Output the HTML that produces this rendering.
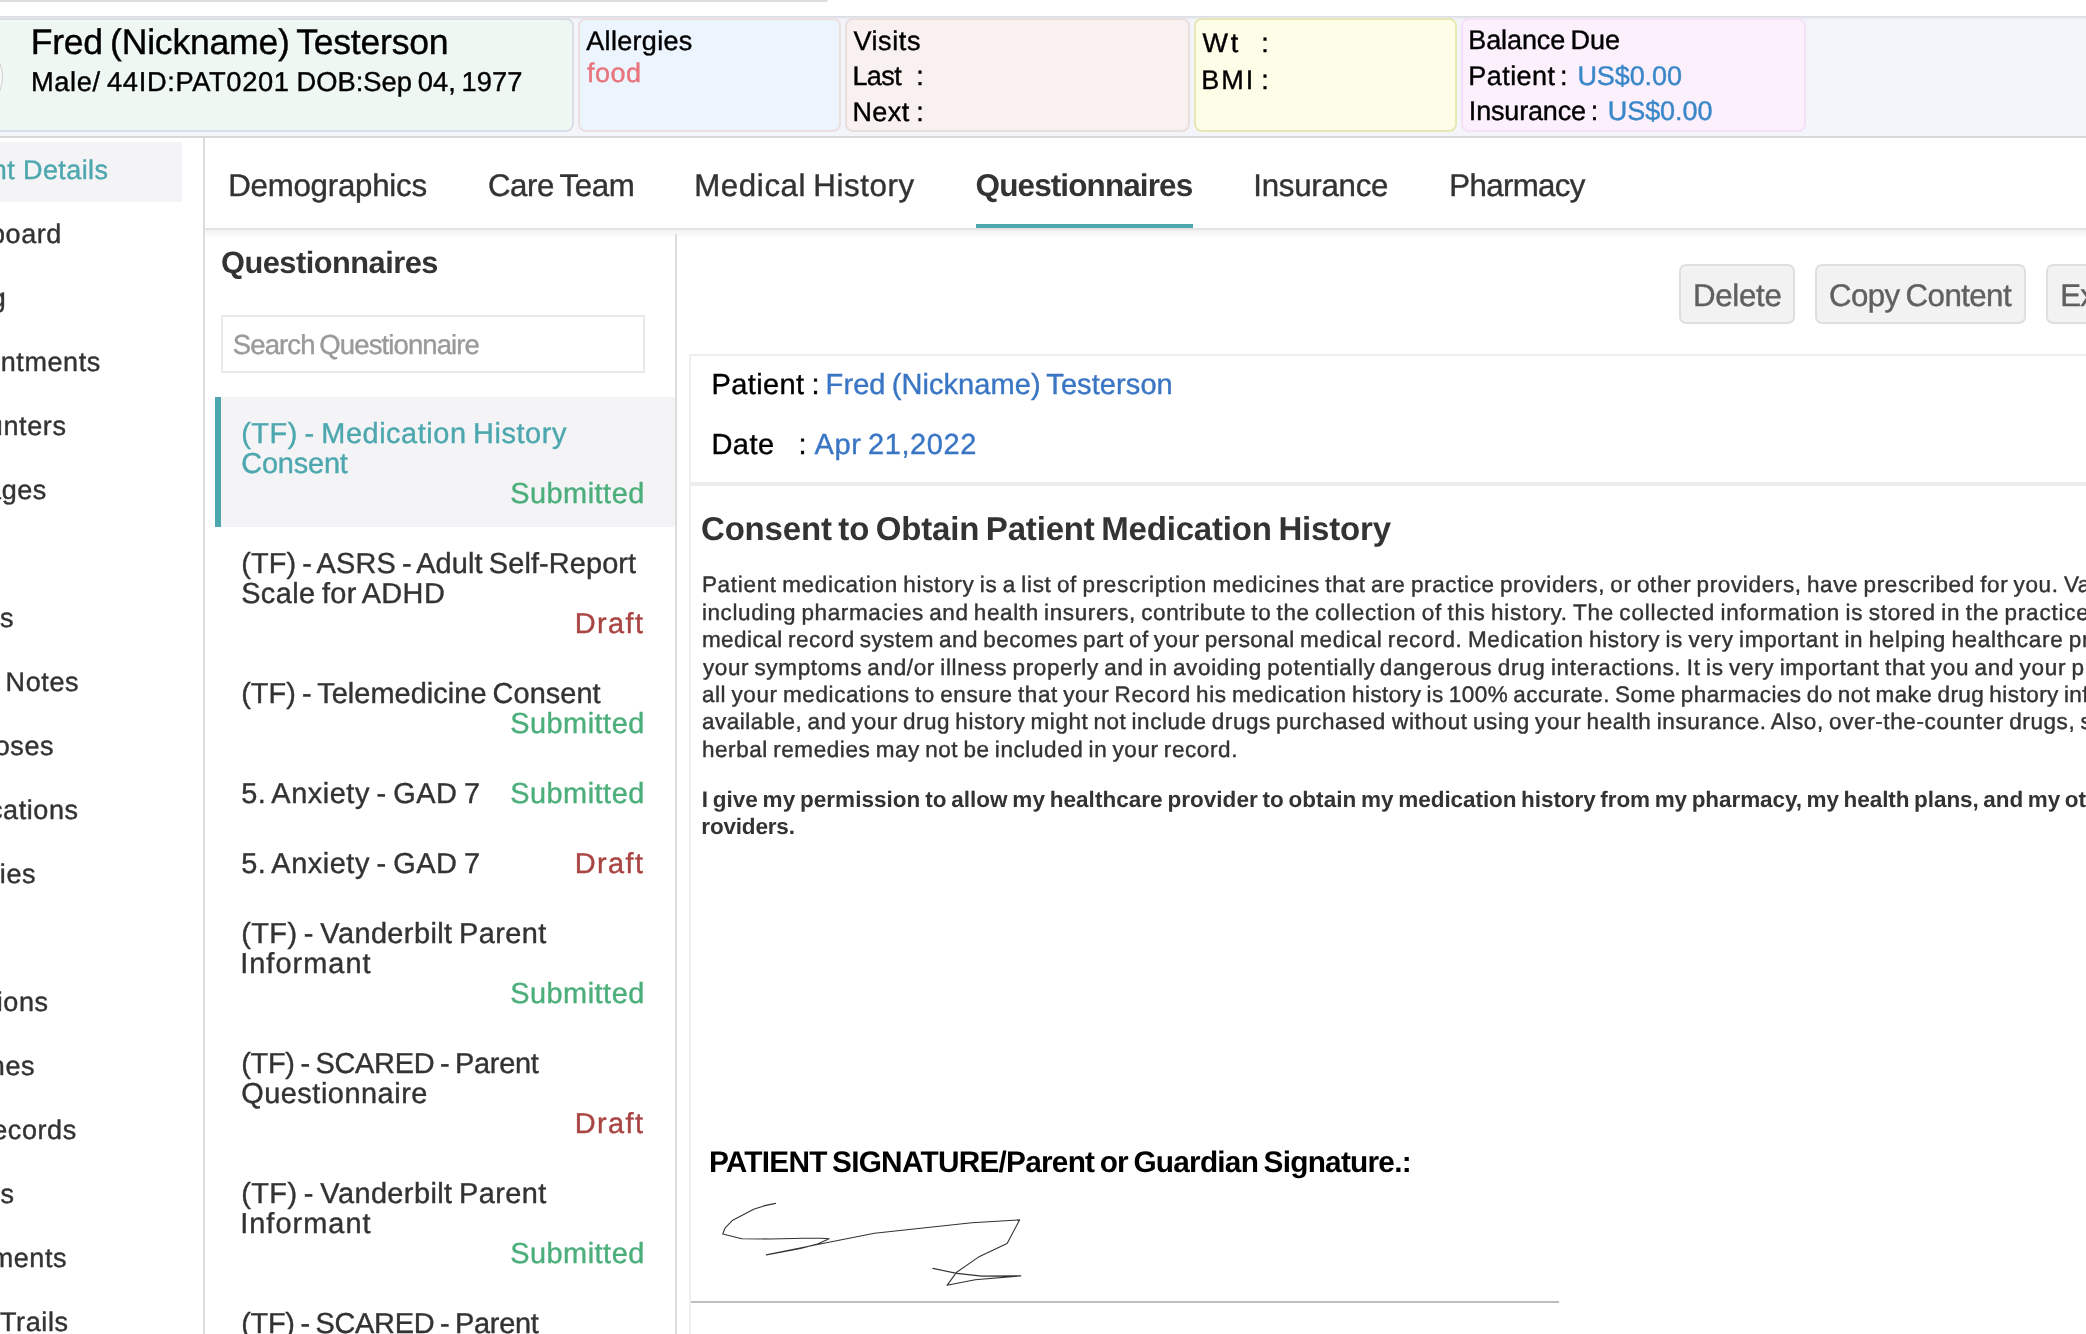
<!DOCTYPE html>
<html lang="en"><head><meta charset="utf-8"><title>Patient Questionnaires</title>
<style>

html,body{margin:0;padding:0;overflow:hidden;}
#root{position:absolute;left:0;top:0;width:2086px;height:1334px;overflow:hidden;background:#fff;}
body{width:2086px;height:1334px;overflow:hidden;background:#fff;position:relative;font-family:"Liberation Sans",sans-serif;color:#000;}
.a{position:absolute;box-sizing:border-box;}
.t{position:absolute;white-space:pre;line-height:normal;-webkit-text-stroke:0.4px;text-rendering:geometricPrecision;}
.b{-webkit-text-stroke:0;}
.txt{position:absolute;left:0;top:0;width:2086px;height:1334px;overflow:hidden;will-change:transform;}
.pre{position:absolute;right:100%;top:0;white-space:pre;}
.card{position:absolute;box-sizing:border-box;top:18px;height:114px;border:2px solid;border-radius:8px;}
.btn{position:absolute;box-sizing:border-box;top:264px;height:60px;border:2px solid #dfdfdf;border-radius:7px;background:#f2f2f2;}

</style></head>
<body>
<div id="root">
<div class="a" style="left:-10px;top:0;width:838px;height:2px;background:#dbdce0;border-radius:0 0 10px 0;"></div>
<div class="a" style="left:0;top:16px;width:2086px;height:122px;background:#f4f5fa;border-bottom:2px solid #d8d8d8;"></div>
<div class="a" style="left:0;top:16px;width:2086px;height:4px;background:linear-gradient(#d9dbe0,rgba(244,245,250,0));"></div>
<div class="card" style="left:-20px;width:594px;background:#eef7f2;border-color:#d7dfea;"></div>
<div class="a" style="left:-69px;top:41px;width:72px;height:72px;border-radius:50%;border:1.5px solid #cfcfcf;background:#f9f9f9;"></div>
<div class="card" style="left:578px;width:263px;background:#ecf4fe;border-color:#ebdfdf;"></div>
<div class="card" style="left:845px;width:345px;background:#f9f0f0;border-color:#eadfdf;"></div>
<div class="card" style="left:1194px;width:263px;background:#fefee8;border-color:#e7e8b4;"></div>
<div class="card" style="left:1461px;width:345px;background:#fdf0fd;border-color:#f6e0f8;"></div>

<div class="a" style="left:0;top:142px;width:182px;height:60px;background:#f4f4f7;"></div>
<div class="a" style="left:203px;top:138px;width:2px;height:1196px;background:#dcdcdc;"></div>

<div class="a" style="left:205px;top:228px;width:1881px;height:2px;background:#e3e3e3;"></div>
<div class="a" style="left:205px;top:230px;width:1881px;height:8px;background:linear-gradient(rgba(0,0,0,0.05),rgba(0,0,0,0));"></div>
<div class="a" style="left:976px;top:224px;width:217px;height:4px;background:#4da7ae;"></div>

<div class="a" style="left:675px;top:234px;width:2px;height:1100px;background:#dcdcdc;"></div>
<div class="a" style="left:221px;top:315px;width:424px;height:58px;border:2px solid #e9e9e9;background:#fff;"></div>
<div class="a" style="left:221px;top:397px;width:454px;height:130px;background:#f4f4f7;"></div>
<div class="a" style="left:215px;top:397px;width:6px;height:130px;background:#4da7ae;"></div>

<div class="btn" style="left:1679px;width:116px;"></div>
<div class="btn" style="left:1815px;width:211px;"></div>
<div class="btn" style="left:2046px;width:120px;"></div>

<div class="a" style="left:689px;top:354px;width:1420px;height:1000px;border-left:2px solid #eeeeee;border-top:2px solid #eeeeee;"></div>
<div class="a" style="left:691px;top:482px;width:1400px;height:4px;background:#ededed;"></div>
<div class="a" style="left:691px;top:1301px;width:868px;height:2px;background:#bdbdbd;"></div>

<svg class="a" style="left:700px;top:1190px;" width="350" height="110" viewBox="700 1190 350 110" fill="none" stroke="#333" stroke-width="1.1" stroke-linejoin="round" stroke-linecap="round">
<path d="M775.5 1203.4 L763.8 1205.9 L753.7 1209.3 L732.7 1220.2 L725.2 1227.8 L722.7 1234 L741.9 1238.7 L770.5 1239 L804 1238.2 L820.8 1238.2 L829.2 1238.7 L817.5 1244 L800.7 1248.4 L766.3 1254.9 L817.5 1244.5 L874.5 1233.3 L971.8 1222.7 L1019.6 1219.9 L1007.1 1243.4 L978.5 1257.1 L956.7 1272.2 L947 1285.3 L975.2 1279.8 L1020.8 1275.9 L981.9 1276.1 L956.7 1273.4 L932.9 1268.4"/>
</svg>
<div class="txt">
<span class="t" style="left:30.70px;top:21.90px;font-size:35.6px;letter-spacing:-0.229px;word-spacing:-2.49px;">Fred (Nickname) Testerson</span>
<span class="t" style="left:30.90px;top:66.10px;font-size:27.3px;letter-spacing:0.624px;word-spacing:-1.91px;">Male/ 44ID:PAT0201</span>
<span class="t" style="left:296.50px;top:66.10px;font-size:27.3px;letter-spacing:0.033px;word-spacing:-1.91px;">DOB:Sep 04, 1977</span>
<span class="t" style="left:586.30px;top:25.70px;font-size:27px;letter-spacing:0.312px;">Allergies</span>
<span class="t" style="left:586.90px;top:58.30px;font-size:27px;color:#e8747c;letter-spacing:0.500px;">food</span>
<span class="t" style="left:853.40px;top:25.70px;font-size:27px;letter-spacing:0.600px;">Visits</span>
<span class="t" style="left:852.40px;top:60.80px;font-size:27px;letter-spacing:-0.567px;">Last</span>
<span class="t" style="left:916.20px;top:60.80px;font-size:27px;">:</span>
<span class="t" style="left:852.40px;top:96.70px;font-size:27px;letter-spacing:0.467px;">Next</span>
<span class="t" style="left:916.20px;top:96.70px;font-size:27px;">:</span>
<span class="t" style="left:1202.40px;top:27.60px;font-size:27px;letter-spacing:2.800px;">Wt</span>
<span class="t" style="left:1261.20px;top:27.60px;font-size:27px;">:</span>
<span class="t" style="left:1201.20px;top:64.50px;font-size:27px;letter-spacing:2.000px;">BMI</span>
<span class="t" style="left:1261.20px;top:64.50px;font-size:27px;">:</span>
<span class="t" style="left:1468.30px;top:25.30px;font-size:27px;letter-spacing:-0.110px;word-spacing:-1.89px;">Balance Due</span>
<span class="t" style="left:1468.30px;top:60.60px;font-size:27px;letter-spacing:0.450px;">Patient</span>
<span class="t" style="left:1559.90px;top:60.60px;font-size:27px;">:</span>
<span class="t" style="left:1577.40px;top:60.60px;font-size:27px;color:#3a87c8;letter-spacing:-0.083px;">US$0.00</span>
<span class="t" style="left:1468.80px;top:96.20px;font-size:27px;letter-spacing:-0.162px;">Insurance</span>
<span class="t" style="left:1590.80px;top:96.20px;font-size:27px;">:</span>
<span class="t" style="left:1607.70px;top:96.20px;font-size:27px;color:#3a87c8;letter-spacing:-0.033px;">US$0.00</span>
<span class="t" style="left:23.00px;top:154.90px;font-size:27px;color:#4da7ae;letter-spacing:0.400px;"><span class="pre">Patient </span>Details</span>
<span class="t" style="left:-75.50px;top:219.00px;font-size:27px;color:#333;letter-spacing:0.600px;">Dashboard</span>
<span class="t" style="left:-100.40px;top:283.00px;font-size:27px;color:#333;letter-spacing:0.600px;">Charting</span>
<span class="t" style="left:-71.40px;top:346.70px;font-size:27px;color:#333;letter-spacing:0.600px;">Appointments</span>
<span class="t" style="left:-76.10px;top:410.60px;font-size:27px;color:#333;letter-spacing:0.600px;">Encounters</span>
<span class="t" style="left:-80.90px;top:475.00px;font-size:27px;color:#333;letter-spacing:0.600px;">Messages</span>
<span class="t" style="left:-55.00px;top:603.00px;font-size:27px;color:#333;letter-spacing:0.600px;">Vitals</span>
<span class="t" style="left:5.60px;top:667.00px;font-size:27px;color:#333;letter-spacing:0.600px;">Notes</span>
<span class="t" style="left:-78.80px;top:731.00px;font-size:27px;color:#333;letter-spacing:0.600px;">Diagnoses</span>
<span class="t" style="left:-72.00px;top:795.00px;font-size:27px;color:#333;letter-spacing:0.600px;">Medications</span>
<span class="t" style="left:-72.80px;top:859.00px;font-size:27px;color:#333;letter-spacing:0.600px;">Allergies</span>
<span class="t" style="left:-133.20px;top:987.00px;font-size:27px;color:#333;letter-spacing:0.600px;">Immunizations</span>
<span class="t" style="left:-77.20px;top:1051.00px;font-size:27px;color:#333;letter-spacing:0.600px;">Vaccines</span>
<span class="t" style="left:-115.80px;top:1115.00px;font-size:27px;color:#333;letter-spacing:0.600px;word-spacing:-1.89px;">Health Records</span>
<span class="t" style="left:-45.40px;top:1179.00px;font-size:27px;color:#333;letter-spacing:0.600px;">Files</span>
<span class="t" style="left:-74.80px;top:1243.00px;font-size:27px;color:#333;letter-spacing:0.600px;">Documents</span>
<span class="t" style="left:0.00px;top:1307.00px;font-size:27px;color:#333;letter-spacing:0.600px;">Trails</span>
<span class="t" style="left:228.20px;top:167.50px;font-size:31.25px;color:#333;letter-spacing:-0.236px;">Demographics</span>
<span class="t" style="left:487.90px;top:167.50px;font-size:31.25px;color:#333;letter-spacing:-0.388px;word-spacing:-2.19px;">Care Team</span>
<span class="t" style="left:694.20px;top:167.50px;font-size:31.25px;color:#333;letter-spacing:0.614px;word-spacing:-2.19px;">Medical History</span>
<span class="t b" style="left:975.60px;top:166.50px;font-size:31.5px;font-weight:700;color:#333;letter-spacing:-0.900px;">Questionnaires</span>
<span class="t" style="left:1253.30px;top:167.50px;font-size:31.25px;color:#333;letter-spacing:-0.262px;">Insurance</span>
<span class="t" style="left:1449.30px;top:167.50px;font-size:31.25px;color:#333;letter-spacing:-0.657px;">Pharmacy</span>
<span class="t b" style="left:221.00px;top:245.40px;font-size:30.75px;font-weight:700;color:#333;letter-spacing:-0.500px;">Questionnaires</span>
<span class="t" style="left:232.80px;top:329.00px;font-size:27.5px;color:#9a9a9a;letter-spacing:-0.895px;word-spacing:-1.93px;">Search Questionnaire</span>
<span class="t" style="left:241.20px;top:417.80px;font-size:28.9px;color:#4da7ae;letter-spacing:0.558px;word-spacing:-2.02px;">(TF) - Medication History</span>
<span class="t" style="left:241.20px;top:447.80px;font-size:28.9px;color:#4da7ae;letter-spacing:-0.150px;">Consent</span>
<span class="t" style="left:510.20px;top:477.80px;font-size:28.9px;color:#4cae7b;letter-spacing:0.500px;">Submitted</span>
<span class="t" style="left:241.20px;top:547.70px;font-size:28.9px;color:#333;letter-spacing:0.123px;word-spacing:-2.02px;">(TF) - ASRS - Adult Self-Report</span>
<span class="t" style="left:241.20px;top:577.70px;font-size:28.9px;color:#333;letter-spacing:0.408px;word-spacing:-2.02px;">Scale for ADHD</span>
<span class="t" style="left:574.70px;top:607.70px;font-size:28.9px;color:#a94442;letter-spacing:1.425px;">Draft</span>
<span class="t" style="left:241.20px;top:677.70px;font-size:28.9px;color:#333;letter-spacing:0.058px;word-spacing:-2.02px;">(TF) - Telemedicine Consent</span>
<span class="t" style="left:510.20px;top:707.70px;font-size:28.9px;color:#4cae7b;letter-spacing:0.500px;">Submitted</span>
<span class="t" style="left:241.20px;top:777.80px;font-size:28.9px;color:#333;letter-spacing:0.547px;word-spacing:-2.02px;">5. Anxiety - GAD 7</span>
<span class="t" style="left:510.20px;top:777.80px;font-size:28.9px;color:#4cae7b;letter-spacing:0.500px;">Submitted</span>
<span class="t" style="left:241.20px;top:847.80px;font-size:28.9px;color:#333;letter-spacing:0.547px;word-spacing:-2.02px;">5. Anxiety - GAD 7</span>
<span class="t" style="left:574.70px;top:847.80px;font-size:28.9px;color:#a94442;letter-spacing:1.425px;">Draft</span>
<span class="t" style="left:241.20px;top:917.80px;font-size:28.9px;color:#333;letter-spacing:0.426px;word-spacing:-2.02px;">(TF) - Vanderbilt Parent</span>
<span class="t" style="left:240.20px;top:947.80px;font-size:28.9px;color:#333;letter-spacing:1.038px;">Informant</span>
<span class="t" style="left:510.20px;top:977.80px;font-size:28.9px;color:#4cae7b;letter-spacing:0.500px;">Submitted</span>
<span class="t" style="left:241.20px;top:1047.80px;font-size:28.9px;color:#333;letter-spacing:-0.271px;word-spacing:-2.02px;">(TF) - SCARED - Parent</span>
<span class="t" style="left:241.20px;top:1077.80px;font-size:28.9px;color:#333;letter-spacing:0.525px;">Questionnaire</span>
<span class="t" style="left:574.70px;top:1107.80px;font-size:28.9px;color:#a94442;letter-spacing:1.425px;">Draft</span>
<span class="t" style="left:241.20px;top:1177.80px;font-size:28.9px;color:#333;letter-spacing:0.426px;word-spacing:-2.02px;">(TF) - Vanderbilt Parent</span>
<span class="t" style="left:240.20px;top:1207.80px;font-size:28.9px;color:#333;letter-spacing:1.038px;">Informant</span>
<span class="t" style="left:510.20px;top:1237.80px;font-size:28.9px;color:#4cae7b;letter-spacing:0.500px;">Submitted</span>
<span class="t" style="left:241.20px;top:1307.80px;font-size:28.9px;color:#333;letter-spacing:-0.271px;word-spacing:-2.02px;">(TF) - SCARED - Parent</span>
<span class="t" style="left:1693.00px;top:277.80px;font-size:31.25px;color:#606060;letter-spacing:-0.300px;">Delete</span>
<span class="t" style="left:1829.00px;top:277.80px;font-size:31.25px;color:#606060;letter-spacing:-0.573px;word-spacing:-2.19px;">Copy Content</span>
<span class="t" style="left:2060.30px;top:277.80px;font-size:31.25px;color:#606060;letter-spacing:-0.800px;">Export</span>
<span class="t" style="left:711.40px;top:368.90px;font-size:29px;letter-spacing:0.417px;">Patient</span>
<span class="t" style="left:811.60px;top:368.90px;font-size:29px;">:</span>
<span class="t" style="left:825.60px;top:368.90px;font-size:29px;color:#3a76c4;letter-spacing:0.083px;word-spacing:-2.03px;">Fred (Nickname) Testerson</span>
<span class="t" style="left:711.40px;top:428.70px;font-size:29px;letter-spacing:0.533px;">Date</span>
<span class="t" style="left:798.60px;top:428.70px;font-size:29px;">:</span>
<span class="t" style="left:814.60px;top:428.70px;font-size:29px;color:#3a76c4;letter-spacing:0.580px;word-spacing:-2.03px;">Apr 21,2022</span>
<span class="t b" style="left:701.00px;top:509.80px;font-size:33px;font-weight:700;color:#333;letter-spacing:-0.186px;word-spacing:-2.31px;">Consent to Obtain Patient Medication History</span>
<span class="t" style="left:701.90px;top:572.05px;font-size:22.5px;color:#333;letter-spacing:0.692px;word-spacing:-1.58px;">Patient medication history is a list of prescription medicines that are </span>
<span class="t" style="left:1410.90px;top:572.05px;font-size:22.5px;color:#333;letter-spacing:0.626px;word-spacing:-1.58px;">practice providers, or other providers, have prescribed for you. Various sources,</span>
<span class="t" style="left:701.90px;top:599.50px;font-size:22.5px;color:#333;letter-spacing:0.611px;word-spacing:-1.58px;">including pharmacies and health insurers, contribute to the </span>
<span class="t" style="left:1315.00px;top:599.50px;font-size:22.5px;color:#333;letter-spacing:0.757px;word-spacing:-1.58px;">collection of this history. The collected information is stored in the practice electronic</span>
<span class="t" style="left:701.90px;top:627.00px;font-size:22.5px;color:#333;letter-spacing:0.483px;word-spacing:-1.58px;">medical record system and becomes part of your personal </span>
<span class="t" style="left:1300.00px;top:627.00px;font-size:22.5px;color:#333;letter-spacing:0.689px;word-spacing:-1.58px;">medical record. Medication history is very important in helping healthcare providers treat</span>
<span class="t" style="left:702.90px;top:654.50px;font-size:22.5px;color:#333;letter-spacing:0.632px;word-spacing:-1.58px;">your symptoms and/or illness properly and in avoiding potentially </span>
<span class="t" style="left:1379.70px;top:654.50px;font-size:22.5px;color:#333;letter-spacing:0.700px;word-spacing:-1.58px;">dangerous drug interactions. It is very important that you and your provider discuss</span>
<span class="t" style="left:701.90px;top:682.00px;font-size:22.5px;color:#333;letter-spacing:0.605px;word-spacing:-1.58px;">all your medications to ensure that your Record his medication </span>
<span class="t" style="left:1352.00px;top:682.00px;font-size:22.5px;color:#333;letter-spacing:0.451px;word-spacing:-1.58px;">history is 100% accurate. Some pharmacies do not make drug history information</span>
<span class="t" style="left:701.90px;top:709.45px;font-size:22.5px;color:#333;letter-spacing:0.535px;word-spacing:-1.58px;">available, and your drug history might not include drugs purchased </span>
<span class="t" style="left:1392.10px;top:709.45px;font-size:22.5px;color:#333;letter-spacing:0.609px;word-spacing:-1.58px;">without using your health insurance. Also, over-the-counter drugs, supplements, or</span>
<span class="t" style="left:701.90px;top:736.90px;font-size:22.5px;color:#333;letter-spacing:0.582px;word-spacing:-1.58px;">herbal remedies may not be included in your record.</span>
<span class="t b" style="left:701.70px;top:787.00px;font-size:22.5px;font-weight:700;color:#333;letter-spacing:0.044px;word-spacing:-1.58px;">I give my permission to allow my healthcare provider to obtain my </span>
<span class="t b" style="left:1398.30px;top:787.00px;font-size:22.5px;font-weight:700;color:#333;letter-spacing:-0.061px;word-spacing:-1.58px;">medication history from my pharmacy, my health plans, and my other healthcare p</span>
<span class="t b" style="left:701.30px;top:813.80px;font-size:22.5px;font-weight:700;color:#333;letter-spacing:-0.175px;">roviders.</span>
<span class="t b" style="left:708.90px;top:1145.90px;font-size:29.8px;font-weight:700;color:#000;letter-spacing:-0.757px;word-spacing:-2.09px;">PATIENT SIGNATURE/Parent or Guardian Signature.:</span>
</div>
</div>

</body></html>
